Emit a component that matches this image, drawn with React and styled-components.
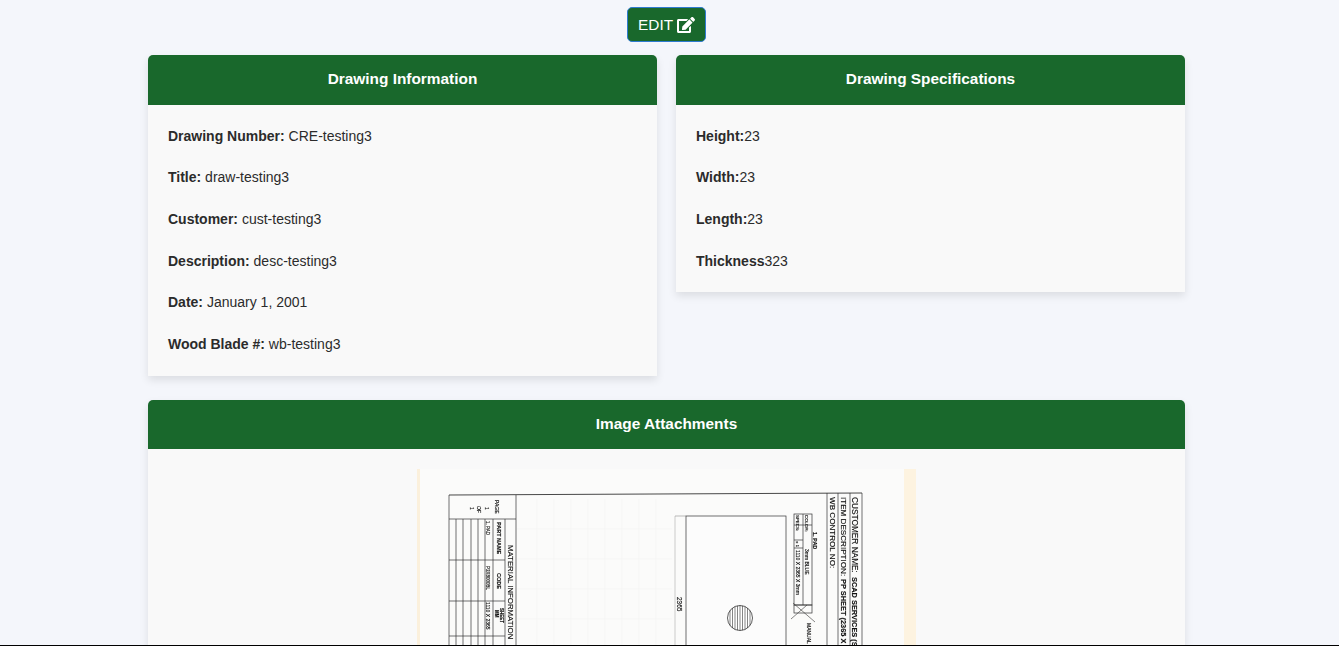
import React from 'react';
import styled, { createGlobalStyle } from 'styled-components';
import { FaEdit } from 'react-icons/fa';

const GlobalStyle = createGlobalStyle`
  html, body {
    margin: 0;
    height: 100%;
    overflow: hidden;
    background: #f4f6fb;
    font-family: "Liberation Sans", Arial, sans-serif;
    color: #2b2b2b;
  }
`;

const Page = styled.div`
  width: 1037px;
  margin-left: 148px;
  padding-top: 7px;
`;

const Toolbar = styled.div`
  display: flex;
  justify-content: center;
  margin-bottom: 13px;
`;

const EditButton = styled.button`
  display: flex;
  align-items: center;
  gap: 4px;
  height: 35px;
  width: 79px;
  padding: 0 0 0 10px;
  background: #19682c;
  border: 1px solid #2f7bd0;
  border-radius: 5px;
  color: #fff;
  font: 15.4px "Liberation Sans", Arial, sans-serif;
`;

const Columns = styled.div`
  display: grid;
  grid-template-columns: 509px 509px;
  justify-content: space-between;
  align-items: start;
  margin-bottom: 24px;
`;

const Card = styled.section`
  background: #f9f9f9;
  border-radius: 5px 5px 0 0;
  box-shadow: 0 4px 8px rgba(0, 0, 0, 0.1);
  overflow: hidden;
`;

const CardHeader = styled.h2`
  margin: 0;
  height: ${p => p.$height}px;
  line-height: ${p => p.$height - 2}px;
  background: #19682c;
  color: #fff;
  font-size: 15.4px;
  font-weight: 700;
  text-align: center;
`;

const CardBody = styled.div`
  padding: 19.8px 20px 1.2px;
`;

const Row = styled.p`
  margin: 0;
  height: 41.6px;
  font-size: 14px;
  line-height: 22px;
`;

const ImageBody = styled.div`
  display: flex;
  justify-content: center;
  padding: 20px;
`;

const Sheet = styled.svg`
  display: block;
  filter: blur(0.35px);
`;

const BottomRule = styled.div`
  position: fixed;
  left: 0;
  right: 0;
  bottom: 0;
  height: 1px;
  background: #000;
`;

const SheetText = ({ x, y, size = 6, weight = 400, children }) => (
  <text
    x={x}
    y={y}
    transform={`rotate(90 ${x} ${y})`}
    fontSize={size}
    fontWeight={weight}
    fontFamily="Liberation Sans, Arial, sans-serif"
    fill="#111"
    stroke="#111"
    strokeWidth="0.15"
  >
    {children}
  </text>
);

const Line = ({ a, b, c, d, w = 0.7, color = '#333' }) => (
  <line x1={a} y1={b} x2={c} y2={d} stroke={color} strokeWidth={w} />
);

// coordinates below are relative to the top left of the scanned sheet
const ScannedDrawing = () => (
  <Sheet width="499" height="420" viewBox="0 0 499 420">
    <rect width="499" height="420" fill="#fbfbfa" />
    <rect x="0" width="3" height="420" fill="#fbf0dc" />
    <rect x="487" width="12" height="420" fill="#fdf3e0" />
    <g stroke="#f3f3f3" strokeWidth="0.6">
      {[120, 137, 154, 171, 188, 205, 222, 239].map(x => (
        <line key={x} x1={x} y1="30" x2={x} y2="420" />
      ))}
      {[60, 90, 120, 150].map(y => (
        <line key={y} x1="100" y1={y} x2="255" y2={y} />
      ))}
    </g>
    <Line a={32} b={26} c={445} d={24} w={0.9} />
    <Line a={32} b={26} c={32} d={420} />
    <Line a={99} b={26} c={99} d={420} />
    <Line a={32} b={50} c={99} d={50} />
    {[39, 46, 54, 61, 68, 76, 88].map(x => (
      <Line key={x} a={x} b={50} c={x} d={420} />
    ))}
    {[91, 132, 167].map(y => (
      <Line key={y} a={32} b={y} c={88} d={y} />
    ))}
    <SheetText x={78} y={31} size={5}>PAGE</SheetText>
    <SheetText x={68} y={38} size={5}>1</SheetText>
    <SheetText x={60} y={37} size={5}>OF</SheetText>
    <SheetText x={53} y={38} size={5}>1</SheetText>
    <SheetText x={91} y={76} size={7.8}>MATERIAL INFORMATION</SheetText>
    <SheetText x={80} y={53} size={5.5} weight={700}>PART NAME</SheetText>
    <SheetText x={69} y={52} size={4.5}>1. PAD</SheetText>
    <SheetText x={80} y={104} size={5.5} weight={700}>CODE</SheetText>
    <SheetText x={69} y={97} size={4.5}>P3X8000BL</SheetText>
    <SheetText x={83} y={139} size={4.5} weight={700}>SHEET</SheetText>
    <SheetText x={78} y={141} size={4.5} weight={700}>MM</SheetText>
    <SheetText x={69} y={133} size={5}>1110 X 2365</SheetText>

    <Line a={445} b={24} c={445} d={420} />
    <Line a={433} b={24} c={433} d={420} />
    <Line a={421} b={24} c={421} d={420} />
    <Line a={410} b={24} c={410} d={420} />
    <SheetText x={435} y={28} size={8.3}>CUSTOMER NAME:</SheetText>
    <SheetText x={435} y={108} size={7.4} weight={700}>SCAD SERVICES (S) PTE</SheetText>
    <SheetText x={424} y={28} size={8.1}>ITEM DESCRIPTION:</SheetText>
    <SheetText x={424} y={110} size={7.4} weight={700}>PP SHEET  (2365 X 1</SheetText>
    <SheetText x={413} y={28} size={8.1}>WB CONTROL NO:</SheetText>

    <SheetText x={396} y={63} size={5.5} weight={700}>1. PAD</SheetText>
    <rect x={377} y={45} width={18} height={91} fill="none" stroke="#333" strokeWidth="0.7" />
    <Line a={386} b={45} c={386} d={136} />
    <Line a={377} b={56} c={395} d={56} />
    <Line a={377} b={71} c={386} d={71} />
    <Line a={377} b={79} c={386} d={79} />
    <SheetText x={388} y={46} size={4.4}>COLOR:</SheetText>
    <SheetText x={388} y={80} size={5}>3mm BLUE</SheetText>
    <SheetText x={379} y={46} size={4.4}>SPECS:</SheetText>
    <SheetText x={379} y={72} size={4.4}>± 1</SheetText>
    <SheetText x={379} y={81} size={5}>1110 X 2365 X 3mm</SheetText>
    <rect x={377} y={136} width={18} height={8} fill="none" stroke="#333" strokeWidth="0.7" />
    <Line a={376} b={134} c={398} d={153} w={0.6} />
    <Line a={374} b={150} c={390} d={136} w={0.6} />
    <SheetText x={390} y={154} size={5}>MANUAL</SheetText>

    <rect x={269} y={47} width={100} height={373} fill="#fcfcfc" stroke="#333" strokeWidth="0.7" />
    <Line a={258} b={47} c={269} d={47} w={0.5} color="#777" />
    <Line a={258} b={47} c={258} d={420} w={0.5} color="#999" />
    <SheetText x={260} y={128} size={6.5}>2365</SheetText>
    <circle cx={323} cy={149} r={12.5} fill="#fff" stroke="#333" strokeWidth="0.8" />
    {[-10, -7.5, -5, -2.5, 0, 2.5, 5, 7.5, 10].map(o => {
      const h = Math.sqrt(156 - o * o);
      return <Line key={o} a={323 + o} b={149 - h} c={323 + o} d={149 + h} w={0.6} />;
    })}
  </Sheet>
);

const leftRows = [
  ['Drawing Number:', ' CRE-testing3'],
  ['Title:', ' draw-testing3'],
  ['Customer:', ' cust-testing3'],
  ['Description:', ' desc-testing3'],
  ['Date:', ' January 1, 2001'],
  ['Wood Blade #:', ' wb-testing3'],
];

const rightRows = [
  ['Height:', '23'],
  ['Width:', '23'],
  ['Length:', '23'],
  ['Thickness', '323'],
];

const InfoCard = ({ title, rows }) => (
  <Card>
    <CardHeader $height={50}>{title}</CardHeader>
    <CardBody>
      {rows.map(([label, value]) => (
        <Row key={label}>
          <strong>{label}</strong>
          {value}
        </Row>
      ))}
    </CardBody>
  </Card>
);

const App = () => (
  <>
    <GlobalStyle />
    <Page>
      <Toolbar>
        <EditButton>
          EDIT <FaEdit size={18} />
        </EditButton>
      </Toolbar>
      <Columns>
        <InfoCard title="Drawing Information" rows={leftRows} />
        <InfoCard title="Drawing Specifications" rows={rightRows} />
      </Columns>
      <Card>
        <CardHeader $height={49}>Image Attachments</CardHeader>
        <ImageBody>
          <ScannedDrawing />
        </ImageBody>
      </Card>
    </Page>
    <BottomRule />
  </>
);

export default App;
